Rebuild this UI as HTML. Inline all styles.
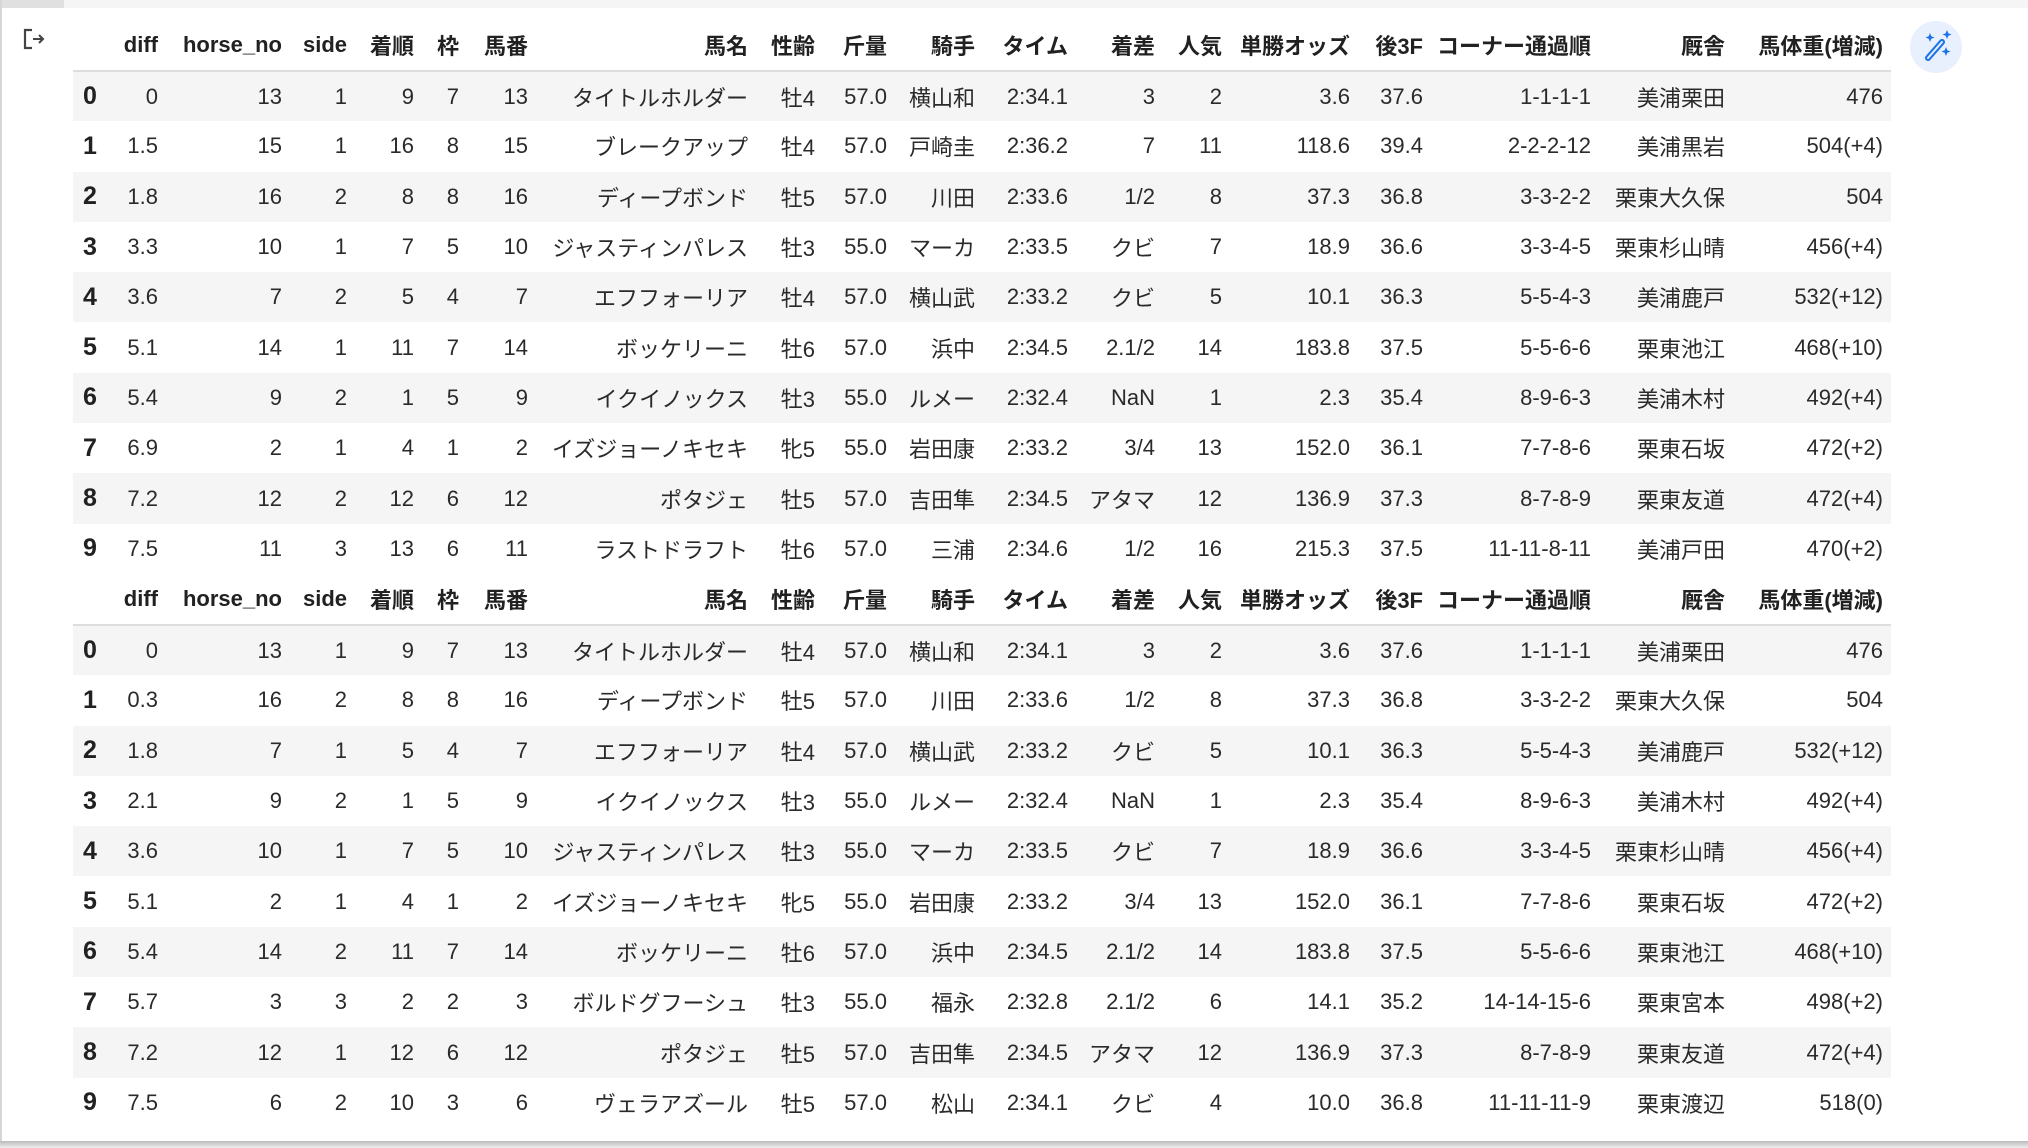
<!DOCTYPE html>
<html><head><meta charset="utf-8"><style>
*{margin:0;padding:0;box-sizing:border-box}
body{width:2028px;height:1148px;background:#fff;position:relative;overflow:hidden;font-family:"Liberation Sans","Noto Sans CJK JP",sans-serif;color:#212121}
.top{position:absolute;left:0;top:0;width:2028px;height:8px;background:#f5f5f5}
.topd{position:absolute;left:0;top:0;width:64px;height:8px;background:#e0e0e0}
.lb{position:absolute;left:0;top:0;width:2px;height:1144px;background:#d6d6d6}
.bot{position:absolute;left:0;top:1141px;width:2028px;height:7px;background:linear-gradient(#bbb,#eee)}
table{position:absolute;left:73px;border-collapse:collapse;table-layout:fixed;width:1818px;font-size:22px}
td,th{text-align:right;padding:0 8px 0 0;white-space:nowrap;height:50.3px;overflow:visible}
td{color:#2a2a2a}
th{font-weight:bold}
thead th{height:51px;border-bottom:2px solid #ddd}
tbody tr:nth-child(odd){background:#f5f5f5}
tbody th{text-align:left;padding-left:10px;font-size:25px}
.ic{position:absolute;left:1910px;top:21px;width:52px;height:52px;border-radius:50%;background:#e8f0fe}
</style></head><body>
<div class="top"></div><div class="topd"></div><div class="lb"></div><div class="bot"></div>
<svg style="position:absolute;left:22px;top:27px" width="28" height="24" viewBox="0 0 28 24"><path d="M10 3H3V21H10" fill="none" stroke="#444" stroke-width="2.2"/><path d="M11 12H21M17 8L21 12L17 16" fill="none" stroke="#444" stroke-width="2"/></svg>
<div class="ic"><svg width="52" height="52" viewBox="0 0 52 52"><path d="M18 37L32 21" stroke="#1a73e8" stroke-width="6" stroke-linecap="round"/><path d="M18 37L32 21" stroke="#e8f0fe" stroke-width="2" stroke-linecap="round"/><path d="M20 12l1.3 3.2 3.2 1.3-3.2 1.3L20 21l-1.3-3.2-3.2-1.3 3.2-1.3zM37 9l1.3 3.2 3.2 1.3-3.2 1.3L37 18l-1.3-3.2-3.2-1.3 3.2-1.3zM36 26l1.3 3.2 3.2 1.3-3.2 1.3L36 35l-1.3-3.2-3.2-1.3 3.2-1.3z" fill="#1a73e8"/></svg></div>

<table style="top:20px">
<colgroup><col style="width:39px"><col style="width:54px"><col style="width:124px"><col style="width:65px"><col style="width:67px"><col style="width:45px"><col style="width:69px"><col style="width:220px"><col style="width:67px"><col style="width:72px"><col style="width:88px"><col style="width:93px"><col style="width:87px"><col style="width:67px"><col style="width:128px"><col style="width:73px"><col style="width:168px"><col style="width:134px"><col style="width:158px"></colgroup>
<thead><tr><th></th><th>diff</th><th>horse_no</th><th>side</th><th>着順</th><th>枠</th><th>馬番</th><th>馬名</th><th>性齢</th><th>斤量</th><th>騎手</th><th>タイム</th><th>着差</th><th>人気</th><th>単勝オッズ</th><th>後3F</th><th>コーナー通過順</th><th>厩舎</th><th>馬体重(増減)</th></tr></thead>
<tbody>
<tr><th>0</th><td>0</td><td>13</td><td>1</td><td>9</td><td>7</td><td>13</td><td>タイトルホルダー</td><td>牡4</td><td>57.0</td><td>横山和</td><td>2:34.1</td><td>3</td><td>2</td><td>3.6</td><td>37.6</td><td>1-1-1-1</td><td>美浦栗田</td><td>476</td></tr>
<tr><th>1</th><td>1.5</td><td>15</td><td>1</td><td>16</td><td>8</td><td>15</td><td>ブレークアップ</td><td>牡4</td><td>57.0</td><td>戸崎圭</td><td>2:36.2</td><td>7</td><td>11</td><td>118.6</td><td>39.4</td><td>2-2-2-12</td><td>美浦黒岩</td><td>504(+4)</td></tr>
<tr><th>2</th><td>1.8</td><td>16</td><td>2</td><td>8</td><td>8</td><td>16</td><td>ディープボンド</td><td>牡5</td><td>57.0</td><td>川田</td><td>2:33.6</td><td>1/2</td><td>8</td><td>37.3</td><td>36.8</td><td>3-3-2-2</td><td>栗東大久保</td><td>504</td></tr>
<tr><th>3</th><td>3.3</td><td>10</td><td>1</td><td>7</td><td>5</td><td>10</td><td>ジャスティンパレス</td><td>牡3</td><td>55.0</td><td>マーカ</td><td>2:33.5</td><td>クビ</td><td>7</td><td>18.9</td><td>36.6</td><td>3-3-4-5</td><td>栗東杉山晴</td><td>456(+4)</td></tr>
<tr><th>4</th><td>3.6</td><td>7</td><td>2</td><td>5</td><td>4</td><td>7</td><td>エフフォーリア</td><td>牡4</td><td>57.0</td><td>横山武</td><td>2:33.2</td><td>クビ</td><td>5</td><td>10.1</td><td>36.3</td><td>5-5-4-3</td><td>美浦鹿戸</td><td>532(+12)</td></tr>
<tr><th>5</th><td>5.1</td><td>14</td><td>1</td><td>11</td><td>7</td><td>14</td><td>ボッケリーニ</td><td>牡6</td><td>57.0</td><td>浜中</td><td>2:34.5</td><td>2.1/2</td><td>14</td><td>183.8</td><td>37.5</td><td>5-5-6-6</td><td>栗東池江</td><td>468(+10)</td></tr>
<tr><th>6</th><td>5.4</td><td>9</td><td>2</td><td>1</td><td>5</td><td>9</td><td>イクイノックス</td><td>牡3</td><td>55.0</td><td>ルメー</td><td>2:32.4</td><td>NaN</td><td>1</td><td>2.3</td><td>35.4</td><td>8-9-6-3</td><td>美浦木村</td><td>492(+4)</td></tr>
<tr><th>7</th><td>6.9</td><td>2</td><td>1</td><td>4</td><td>1</td><td>2</td><td>イズジョーノキセキ</td><td>牝5</td><td>55.0</td><td>岩田康</td><td>2:33.2</td><td>3/4</td><td>13</td><td>152.0</td><td>36.1</td><td>7-7-8-6</td><td>栗東石坂</td><td>472(+2)</td></tr>
<tr><th>8</th><td>7.2</td><td>12</td><td>2</td><td>12</td><td>6</td><td>12</td><td>ポタジェ</td><td>牡5</td><td>57.0</td><td>吉田隼</td><td>2:34.5</td><td>アタマ</td><td>12</td><td>136.9</td><td>37.3</td><td>8-7-8-9</td><td>栗東友道</td><td>472(+4)</td></tr>
<tr><th>9</th><td>7.5</td><td>11</td><td>3</td><td>13</td><td>6</td><td>11</td><td>ラストドラフト</td><td>牡6</td><td>57.0</td><td>三浦</td><td>2:34.6</td><td>1/2</td><td>16</td><td>215.3</td><td>37.5</td><td>11-11-8-11</td><td>美浦戸田</td><td>470(+2)</td></tr>
</tbody></table>

<table style="top:574px">
<colgroup><col style="width:39px"><col style="width:54px"><col style="width:124px"><col style="width:65px"><col style="width:67px"><col style="width:45px"><col style="width:69px"><col style="width:220px"><col style="width:67px"><col style="width:72px"><col style="width:88px"><col style="width:93px"><col style="width:87px"><col style="width:67px"><col style="width:128px"><col style="width:73px"><col style="width:168px"><col style="width:134px"><col style="width:158px"></colgroup>
<thead><tr><th></th><th>diff</th><th>horse_no</th><th>side</th><th>着順</th><th>枠</th><th>馬番</th><th>馬名</th><th>性齢</th><th>斤量</th><th>騎手</th><th>タイム</th><th>着差</th><th>人気</th><th>単勝オッズ</th><th>後3F</th><th>コーナー通過順</th><th>厩舎</th><th>馬体重(増減)</th></tr></thead>
<tbody>
<tr><th>0</th><td>0</td><td>13</td><td>1</td><td>9</td><td>7</td><td>13</td><td>タイトルホルダー</td><td>牡4</td><td>57.0</td><td>横山和</td><td>2:34.1</td><td>3</td><td>2</td><td>3.6</td><td>37.6</td><td>1-1-1-1</td><td>美浦栗田</td><td>476</td></tr>
<tr><th>1</th><td>0.3</td><td>16</td><td>2</td><td>8</td><td>8</td><td>16</td><td>ディープボンド</td><td>牡5</td><td>57.0</td><td>川田</td><td>2:33.6</td><td>1/2</td><td>8</td><td>37.3</td><td>36.8</td><td>3-3-2-2</td><td>栗東大久保</td><td>504</td></tr>
<tr><th>2</th><td>1.8</td><td>7</td><td>1</td><td>5</td><td>4</td><td>7</td><td>エフフォーリア</td><td>牡4</td><td>57.0</td><td>横山武</td><td>2:33.2</td><td>クビ</td><td>5</td><td>10.1</td><td>36.3</td><td>5-5-4-3</td><td>美浦鹿戸</td><td>532(+12)</td></tr>
<tr><th>3</th><td>2.1</td><td>9</td><td>2</td><td>1</td><td>5</td><td>9</td><td>イクイノックス</td><td>牡3</td><td>55.0</td><td>ルメー</td><td>2:32.4</td><td>NaN</td><td>1</td><td>2.3</td><td>35.4</td><td>8-9-6-3</td><td>美浦木村</td><td>492(+4)</td></tr>
<tr><th>4</th><td>3.6</td><td>10</td><td>1</td><td>7</td><td>5</td><td>10</td><td>ジャスティンパレス</td><td>牡3</td><td>55.0</td><td>マーカ</td><td>2:33.5</td><td>クビ</td><td>7</td><td>18.9</td><td>36.6</td><td>3-3-4-5</td><td>栗東杉山晴</td><td>456(+4)</td></tr>
<tr><th>5</th><td>5.1</td><td>2</td><td>1</td><td>4</td><td>1</td><td>2</td><td>イズジョーノキセキ</td><td>牝5</td><td>55.0</td><td>岩田康</td><td>2:33.2</td><td>3/4</td><td>13</td><td>152.0</td><td>36.1</td><td>7-7-8-6</td><td>栗東石坂</td><td>472(+2)</td></tr>
<tr><th>6</th><td>5.4</td><td>14</td><td>2</td><td>11</td><td>7</td><td>14</td><td>ボッケリーニ</td><td>牡6</td><td>57.0</td><td>浜中</td><td>2:34.5</td><td>2.1/2</td><td>14</td><td>183.8</td><td>37.5</td><td>5-5-6-6</td><td>栗東池江</td><td>468(+10)</td></tr>
<tr><th>7</th><td>5.7</td><td>3</td><td>3</td><td>2</td><td>2</td><td>3</td><td>ボルドグフーシュ</td><td>牡3</td><td>55.0</td><td>福永</td><td>2:32.8</td><td>2.1/2</td><td>6</td><td>14.1</td><td>35.2</td><td>14-14-15-6</td><td>栗東宮本</td><td>498(+2)</td></tr>
<tr><th>8</th><td>7.2</td><td>12</td><td>1</td><td>12</td><td>6</td><td>12</td><td>ポタジェ</td><td>牡5</td><td>57.0</td><td>吉田隼</td><td>2:34.5</td><td>アタマ</td><td>12</td><td>136.9</td><td>37.3</td><td>8-7-8-9</td><td>栗東友道</td><td>472(+4)</td></tr>
<tr><th>9</th><td>7.5</td><td>6</td><td>2</td><td>10</td><td>3</td><td>6</td><td>ヴェラアズール</td><td>牡5</td><td>57.0</td><td>松山</td><td>2:34.1</td><td>クビ</td><td>4</td><td>10.0</td><td>36.8</td><td>11-11-11-9</td><td>栗東渡辺</td><td>518(0)</td></tr>
</tbody></table>
</body></html>
